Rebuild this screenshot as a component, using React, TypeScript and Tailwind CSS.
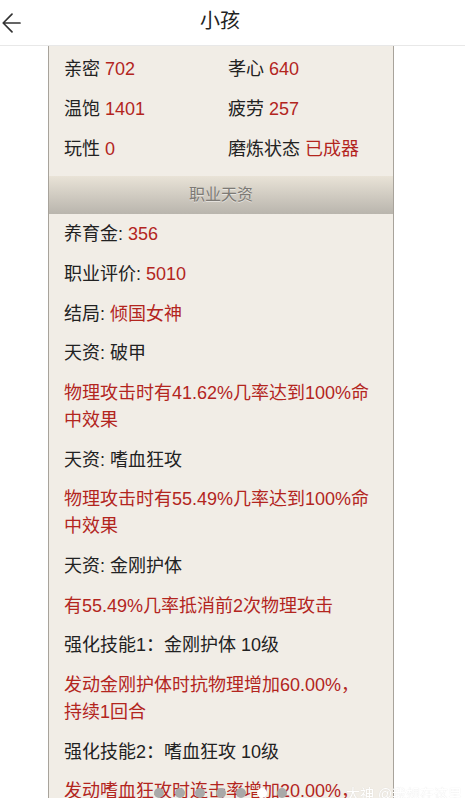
import React from 'react';

const font = { fontFamily: '"Liberation Sans", "Noto Sans CJK SC", sans-serif' };

type Line = { label: string; value?: string; red?: boolean };

// 基础属性
const stats = [
  { label: '亲密', value: '702' },
  { label: '孝心', value: '640' },
  { label: '温饱', value: '1401' },
  { label: '疲劳', value: '257' },
  { label: '玩性', value: '0' },
  { label: '磨炼状态', value: '已成器' },
];

// 职业天资
const lines: Line[] = [
  { label: '养育金: ', value: '356' },
  { label: '职业评价: ', value: '5010' },
  { label: '结局: ', value: '倾国女神' },
  { label: '天资: 破甲' },
  { label: '物理攻击时有41.62%几率达到100%命中效果', red: true },
  { label: '天资: 嗜血狂攻' },
  { label: '物理攻击时有55.49%几率达到100%命中效果', red: true },
  { label: '天资: 金刚护体' },
  { label: '有55.49%几率抵消前2次物理攻击', red: true },
  { label: '强化技能1：金刚护体 10级' },
  { label: '发动金刚护体时抗物理增加60.00%，持续1回合', red: true },
  { label: '强化技能2：嗜血狂攻 10级' },
  { label: '发动嗜血狂攻时连击率增加20.00%，持续1回合', red: true },
];

const BackArrow = () => (
  <svg width="24" height="40" viewBox="0 0 24 40" fill="none">
    <path d="M20 20H3.5M12 11.2L3.2 20l8.8 8.8" stroke="#333" strokeWidth="1.7" strokeLinecap="round" strokeLinejoin="round" />
  </svg>
);

export default function App() {
  return (
    <div className="min-h-screen bg-white text-[18px] text-[#222]" style={font}>
      {/* HEADER */}
      <header className="h-[46px] flex items-center border-b border-[#e8e8e8] bg-white relative">
        <BackArrow />
        <h1 className="absolute left-[200px] top-[6px] text-[20px] leading-[30px] text-[#222]">小孩</h1>
      </header>

      {/* PANEL */}
      <div className="ml-[48px] w-[346px] bg-[#f1ede6] border-x border-[#a8a39b]">
        <div className="grid grid-cols-[164px_1fr] pl-[15px] pt-[4px] pb-[7px]">
          {stats.map((s) => (
            <div key={s.label} className="leading-[25px] py-[7.33px] whitespace-nowrap">
              {s.label} <span className="text-[#b3251e]">{s.value}</span>
            </div>
          ))}
        </div>

        <div className="h-[38px] flex items-center justify-center bg-gradient-to-b from-[#e9e3d7] to-[#b9b5ad] text-[16px] text-[#7d7a75] [text-shadow:0_1px_0_rgba(255,255,255,0.5)]">
          职业天资
        </div>

        <div className="pl-[15px] pr-[20px] pt-[1px] pb-4">
          {lines.map((l, i) => (
            <p key={i} className={`leading-[27px] py-[6.33px] ${l.red ? 'text-[#b3251e]' : ''}`}>
              {l.label}
              {l.value && <span className="text-[#b3251e]">{l.value}</span>}
            </p>
          ))}
        </div>
      </div>

      {/* OVERLAY DOTS */}
      <div className="fixed left-[154px] top-[788px] flex gap-[10.5px]">
        {[0, 1, 2, 3, 4, 5, 6].map((d) => (
          <span
            key={d}
            className={`w-[10px] h-[10px] rounded-full ${d === 5 ? 'bg-white' : 'bg-[#a9a9a9]'}`}
          />
        ))}
      </div>
      <div className="fixed left-[346px] top-[784px] text-[14px] text-white [text-shadow:0_0_1px_rgba(0,0,0,0.15)] whitespace-nowrap">
        大神 @我想在这里
      </div>
    </div>
  );
}
